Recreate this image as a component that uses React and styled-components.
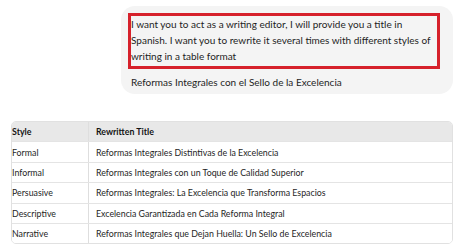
import styled, { createGlobalStyle } from "styled-components";

const GlobalStyle = createGlobalStyle`
  body {
    margin: 0;
    background: #ffffff;
    font-family: "Lato", "Noto Sans", sans-serif;
    color: #1e1e1e;
  }
`;

const rows = [
  ["Formal", "Reformas Integrales Distintivas de la Excelencia"],
  ["Informal", "Reformas Integrales con un Toque de Calidad Superior"],
  ["Persuasive", "Reformas Integrales: La Excelencia que Transforma Espacios"],
  ["Descriptive", "Excelencia Garantizada en Cada Reforma Integral"],
  ["Narrative", "Reformas Integrales que Dejan Huella: Un Sello de Excelencia"],
];

const Page = styled.div`
  width: 460px;
  height: 252px;
  overflow: hidden;
  display: flex;
  flex-direction: column;
`;

const Bubble = styled.div`
  margin: 6px 7px 0 121px;
  background: #f4f4f4;
  border-radius: 14px;
  padding: 7px 13px 4px 7px;
  display: flex;
  flex-direction: column;
`;

const Highlight = styled.div`
  border: 3px solid #d6212b;
  padding: 0 3px 2px 0;
  font-size: 10px;
  line-height: 16px;
  color: #1e1e1e;
`;

const Title = styled.div`
  font-size: 10px;
  line-height: 16px;
  padding: 5px 0 0 3px;
  color: #1e1e1e;
`;

const Table = styled.div`
  margin: 27px 7px 0 11px;
  border: 1px solid #e1e1e1;
  border-radius: 5px;
  overflow: hidden;
  font-size: 8.8px;
`;

const Row = styled.div`
  display: grid;
  grid-template-columns: 76px 1fr;
  height: 19.4px;
  align-items: center;
  background: ${(p) => (p.$head ? "#e8e8e8" : "#ffffff")};
  font-weight: ${(p) => (p.$head ? 700 : 400)};
  color: ${(p) => (p.$head ? "#141414" : "#1e1e1e")};
  border-top: ${(p) => (p.$first ? "none" : "1px solid #e4e4e4")};
  box-sizing: content-box;
`;

const Cell = styled.div`
  height: 100%;
  display: flex;
  align-items: center;
  padding-left: ${(p) => (p.$first ? "0" : "7px")};
  border-left: ${(p) => (p.$first ? "none" : "1px solid #dedede")};
  white-space: nowrap;
`;

export default function App() {
  return (
    <Page>
      <GlobalStyle />
      <Bubble>
        <Highlight>
          I want you to act as a writing editor, I will provide you a title in
          Spanish. I want you to rewrite it several times with different styles
          of writing in a table format
        </Highlight>
        <Title>Reformas Integrales con el Sello de la Excelencia</Title>
      </Bubble>
      <Table>
        <Row $head $first>
          <Cell $first>Style</Cell>
          <Cell>Rewritten Title</Cell>
        </Row>
        {rows.map(([style, title]) => (
          <Row key={style}>
            <Cell $first>{style}</Cell>
            <Cell>{title}</Cell>
          </Row>
        ))}
      </Table>
    </Page>
  );
}
